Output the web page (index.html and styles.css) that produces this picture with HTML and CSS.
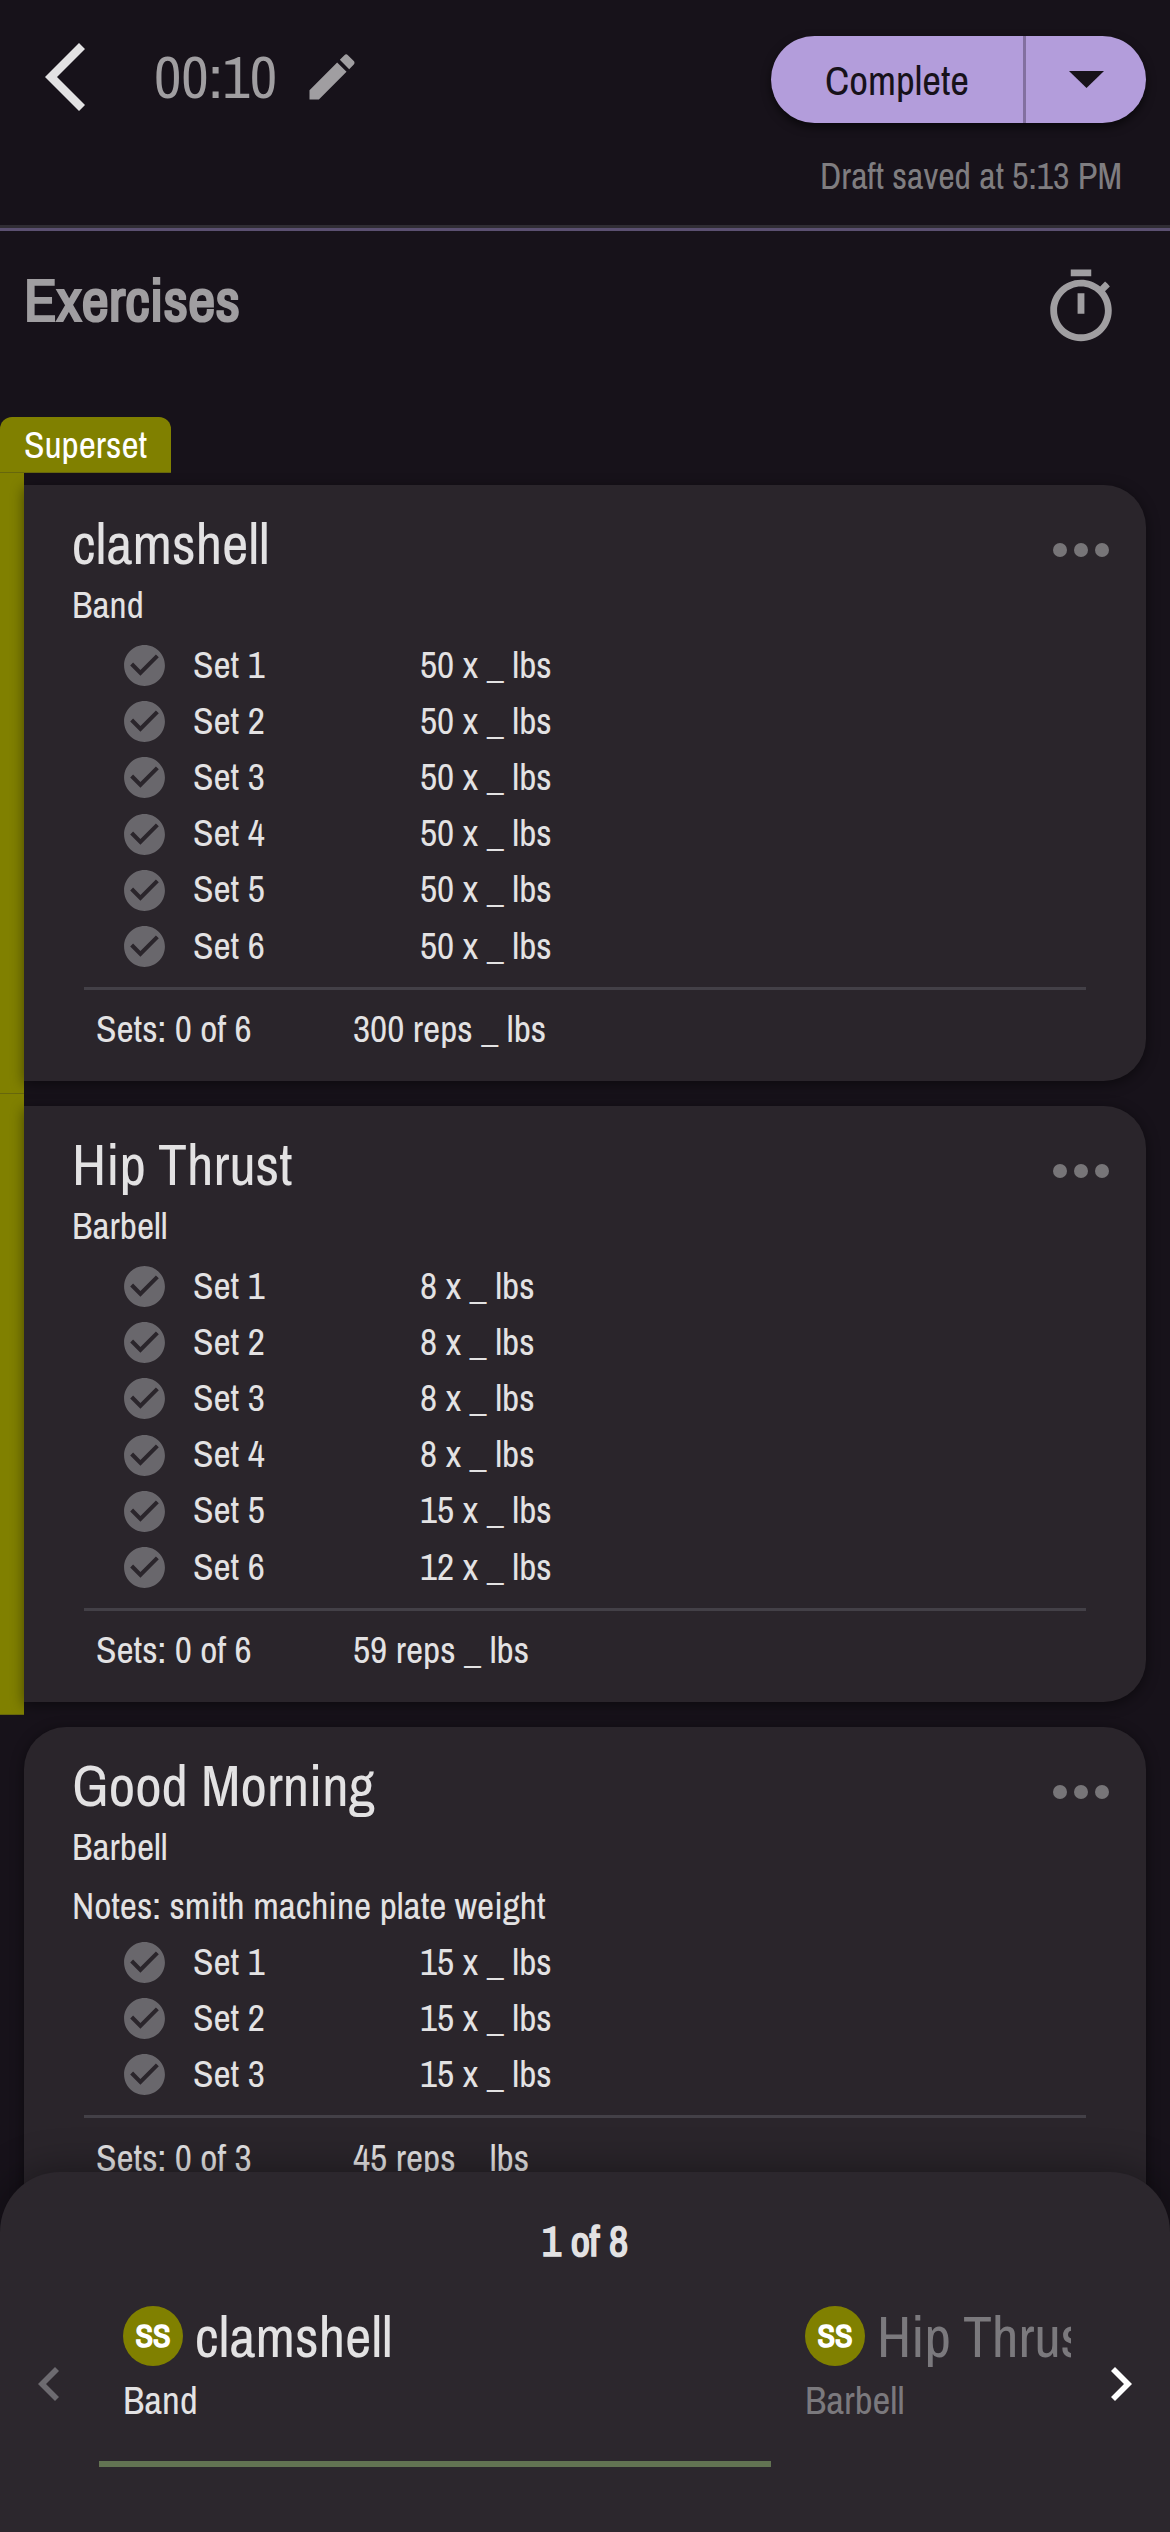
FILE: index.html
```html
<!DOCTYPE html>
<html lang="en">
<head>
<meta charset="utf-8">
<title>Workout</title>
<link rel="stylesheet" href="styles.css">
</head>
<body>
<svg class="defs" width="0" height="0">
  <symbol id="check" viewBox="0 0 24 24"><path d="M12 2C6.48 2 2 6.48 2 12s4.48 10 10 10 10-4.48 10-10S17.52 2 12 2zm-2 15-5-5 1.41-1.41L10 14.17l7.59-7.59L19 8l-9 9z"/></symbol>
  <symbol id="dots" viewBox="0 0 56 14"><circle cx="7" cy="7" r="7"/><circle cx="28" cy="7" r="7"/><circle cx="49" cy="7" r="7"/></symbol>
</svg>
<header class="topbar">
  <svg class="back" viewBox="0 0 40 68"><path d="M0 34 34 0 40 6 12 34 40 62 34 68z"/></svg>
  <span class="timer">00:10</span>
  <svg class="pencil" viewBox="0 0 24 24"><path d="M3 17.25V21h3.75L17.81 9.94l-3.75-3.75L3 17.25zM20.71 7.04c.39-.39.39-1.02 0-1.41l-2.34-2.34a.996.996 0 0 0-1.41 0l-1.83 1.83 3.75 3.75 1.83-1.83z"/></svg>
  <div class="actions">
    <div class="split">
      <span class="complete">Complete</span>
      <span class="drop"><svg viewBox="0 0 35 17"><path d="M0 0h35L17.500 17z"/></svg></span>
    </div>
    <span class="draft">Draft saved at 5:13 PM</span>
  </div>
</header>
<main class="content">
  <div class="heading">
    <h1>Exercises</h1>
    <svg class="stopwatch" viewBox="0 0 24 24"><path d="M15 1H9v2h6V1zm-4 13h2V8h-2v6zm8.030-6.610 1.420-1.420c-.43-.51-.9-.99-1.410-1.410l-1.420 1.420C16.070 4.740 14.120 4 12 4c-4.970 0-9 4.030-9 9s4.020 9 9 9 9-4.030 9-9c0-2.120-.74-4.070-1.970-5.610zM12 20c-3.870 0-7-3.130-7-7s3.130-7 7-7 7 3.130 7 7-3.130 7-7 7z"/></svg>
  </div>
  <div class="tab">Superset</div>
  <section class="item grouped">
    <div class="bar"></div>
    <article class="card">
      <div class="card-head"><h2>clamshell</h2><svg class="more"><use href="#dots"/></svg></div>
      <p class="gear">Band</p>
      <div class="set"><svg><use href="#check"/></svg><span>Set 1</span><span>50 x _ lbs</span></div>
      <div class="set"><svg><use href="#check"/></svg><span>Set 2</span><span>50 x _ lbs</span></div>
      <div class="set"><svg><use href="#check"/></svg><span>Set 3</span><span>50 x _ lbs</span></div>
      <div class="set"><svg><use href="#check"/></svg><span>Set 4</span><span>50 x _ lbs</span></div>
      <div class="set"><svg><use href="#check"/></svg><span>Set 5</span><span>50 x _ lbs</span></div>
      <div class="set"><svg><use href="#check"/></svg><span>Set 6</span><span>50 x _ lbs</span></div>
      <div class="total"><span>Sets: 0 of 6</span><span>300 reps _ lbs</span></div>
    </article>
  </section>
  <section class="item grouped">
    <div class="bar"></div>
    <article class="card">
      <div class="card-head"><h2>Hip Thrust</h2><svg class="more"><use href="#dots"/></svg></div>
      <p class="gear">Barbell</p>
      <div class="set"><svg><use href="#check"/></svg><span>Set 1</span><span>8 x _ lbs</span></div>
      <div class="set"><svg><use href="#check"/></svg><span>Set 2</span><span>8 x _ lbs</span></div>
      <div class="set"><svg><use href="#check"/></svg><span>Set 3</span><span>8 x _ lbs</span></div>
      <div class="set"><svg><use href="#check"/></svg><span>Set 4</span><span>8 x _ lbs</span></div>
      <div class="set"><svg><use href="#check"/></svg><span>Set 5</span><span>15 x _ lbs</span></div>
      <div class="set"><svg><use href="#check"/></svg><span>Set 6</span><span>12 x _ lbs</span></div>
      <div class="total"><span>Sets: 0 of 6</span><span>59 reps _ lbs</span></div>
    </article>
  </section>
  <section class="item">
    <article class="card">
      <div class="card-head"><h2>Good Morning</h2><svg class="more"><use href="#dots"/></svg></div>
      <p class="gear">Barbell</p>
      <p class="notes">Notes: smith machine plate weight</p>
      <div class="set"><svg><use href="#check"/></svg><span>Set 1</span><span>15 x _ lbs</span></div>
      <div class="set"><svg><use href="#check"/></svg><span>Set 2</span><span>15 x _ lbs</span></div>
      <div class="set"><svg><use href="#check"/></svg><span>Set 3</span><span>15 x _ lbs</span></div>
      <div class="total"><span>Sets: 0 of 3</span><span>45 reps _ lbs</span></div>
    </article>
  </section>
</main>
<footer class="sheet">
  <div class="count">1 of 8</div>
  <div class="pager">
    <svg class="prev" viewBox="0 0 21 34"><path d="M0 17 17 0 21 4 8 17 21 30 17 34z"/></svg>
    <div class="slides">
      <div class="slide active">
        <div class="name"><b class="badge">SS</b><span>clamshell</span></div>
        <div class="kind">Band</div>
      </div>
      <div class="slide">
        <div class="name"><b class="badge">SS</b><span>Hip Thrust</span></div>
        <div class="kind">Barbell</div>
      </div>
    </div>
    <svg class="next" viewBox="0 0 21 34"><path d="M21 17 4 0 0 4 13 17 0 30 4 34z"/></svg>
  </div>
</footer>
</body>
</html>
```
FILE: styles.css
```css
* { box-sizing: border-box; margin: 0; padding: 0; }
body {
  width: 1170px; height: 2532px; overflow: hidden; position: relative;
  background: #17121a; color: #e3e2e3;
  font-family: "Archivo Narrow", "Liberation Sans Narrow", "Liberation Sans", sans-serif;
  font-size: 37.500px; white-space: nowrap;
}
svg { fill: currentColor; flex: none; display: block; }
.defs { position: absolute; }

.topbar {
  height: 231px; display: flex; align-items: flex-start;
  padding: 36px 24px 0 45px;
  border-bottom: 3px solid #5b5071;
  box-shadow: inset 0 -3px #302d34;
}
.back { width: 40px; height: 68px; margin-top: 7px; }
.timer { width: 148px; margin: 2px 0 0 69px; font-size: 60px; line-height: 78px; color: #a09ea1; }
.pencil { width: 60px; height: 60px; margin-top: 10.500px; color: #a09ea1; }
.actions { margin-left: auto; display: flex; flex-direction: column; align-items: flex-end; }
.split {
  width: 375px; height: 87px; display: flex; border-radius: 44px;
  background: #b39ddb; color: #17121a; box-shadow: 0 4px 10px #0009;
}
.complete { width: 252px; text-align: center; font-size: 41px; line-height: 89px; }
.drop { flex: 1; display: flex; align-items: center; justify-content: center; border-left: 3px solid #8370a0; }
.drop svg { width: 35px; height: 17px; }
.draft { margin: 25px 24px 0 0; font-size: 36px; line-height: 56px; color: #7f7d80; }

.heading { height: 186px; padding: 35px 48px 0 24px; display: flex; justify-content: space-between; color: #a09ea1; }
h1 { font-size: 60px; line-height: 67px; font-weight: 400; -webkit-text-stroke: 2.200px; }
.stopwatch { width: 82px; height: 82px; }

.tab {
  width: 171px; height: 56px; padding-left: 24px; border-radius: 12px 12px 0 0;
  background: #808000; color: #fff; line-height: 56px; border-bottom: 1px solid #67670c;
}
.item { display: flex; padding-left: 24px; padding-right: 24px; }
.item.grouped { padding-left: 0; }
.bar { width: 24px; background: #808000; border-bottom: 1px solid #67670c; }
.card {
  flex: 1; height: 596px; margin: 12px 0 13px; padding: 27px 37px 0 48px;
  background: #2a252b; border-radius: 42px; box-shadow: 0 3px 14px #0007;
}
.grouped .card { border-radius: 0 42px 42px 0; }
.card-head { height: 65.500px; display: flex; justify-content: space-between; }
h2 { font-size: 57.800px; line-height: 62px; font-weight: 400; }
.more { width: 56px; height: 14px; margin-top: 31px; color: #777578; }
.gear { height: 60px; line-height: 53px; }
.notes { height: 55px; line-height: 51px; }
.set { height: 56.200px; display: grid; grid-template-columns: 73px 227px 1fr; align-items: center; padding-left: 48px; line-height: 54px; }
.set span { padding-bottom: 2px; }
.set svg { width: 49px; height: 49px; color: #69676c; }
.total {
  display: grid; grid-template-columns: 257px 1fr; margin: 12px 23px 0 12px;
  padding: 11.800px 0 0 12px; border-top: 3px solid #434047; line-height: 56px;
}

.sheet {
  position: absolute; left: 0; right: 0; bottom: 0; height: 360px;
  background: #2c272d; border-radius: 60px 60px 0 0; box-shadow: 0 0 40px #0006;
}
.count { padding-top: 38px; text-align: center; font-size: 42px; line-height: 62px; -webkit-text-stroke: 1.600px; }
.pager { height: 195px; display: flex; padding: 0 38px; }
.prev, .next { width: 21px; height: 34px; margin-top: 95px; }
.prev { color: #6d6b70; }
.next { color: #fff; }
.slides { flex: 1; margin: 0 40px; display: flex; overflow: hidden; }
.slide { width: 672px; height: 195px; flex: none; padding: 32px 0 0 24px; margin-left: 10px; }
.slide .name, .slide .kind { color: #7b797d; }
.slide.active { margin-left: 0; border-bottom: 6px solid #627352; }
.active .name, .active .kind { color: #e3e2e3; }
.name { display: flex; align-items: center; gap: 12px; height: 64px; font-size: 57.800px; }
.name .badge { width: 60px; height: 60px; border-radius: 50%; background: #808000; color: #fff; font-size: 32px; line-height: 60px; text-align: center; font-weight: 400; -webkit-text-stroke: 1.600px; }
.kind { font-size: 39px; line-height: 64px; }
```
